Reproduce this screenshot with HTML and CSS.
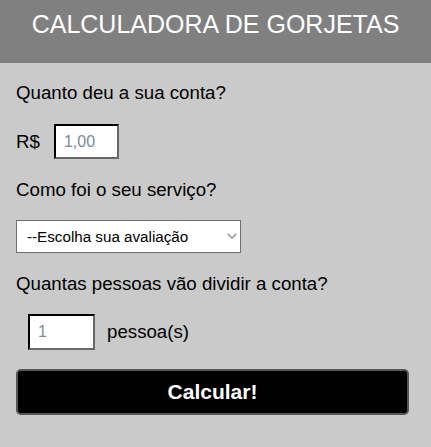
FILE: index.html
```html
<!DOCTYPE html>
<html lang="pt-BR">
<head>
<meta charset="utf-8">
<title>Calculadora de Gorjetas</title>
<link rel="stylesheet" href="styles.css">
</head>
<body>
<header class="topbar">
  <h1 class="title">CALCULADORA DE GORJETAS</h1>
</header>
<main class="content">
  <p class="label">Quanto deu a sua conta?</p>
  <div class="row">
    <span class="unit">R$</span>
    <input class="field field-bill" type="text" placeholder="1,00">
  </div>
  <p class="label">Como foi o seu serviço?</p>
  <div class="select-wrap">
    <select class="select">
      <option>--Escolha sua avaliação</option>
    </select>
    <svg class="chevron" width="10" height="6" viewBox="0 0 10 6" aria-hidden="true">
      <path d="M0.8 0.8 L5 5 L9.2 0.8" fill="none" stroke="#8a8a8a" stroke-width="1.3"/>
    </svg>
  </div>
  <p class="label">Quantas pessoas vão dividir a conta?</p>
  <div class="row row-people">
    <input class="field field-people" type="text" placeholder="1">
    <span class="unit">pessoa(s)</span>
  </div>
  <button class="btn" type="button">Calcular!</button>
</main>
</body>
</html>
```

FILE: styles.css
```css
html, body {
  margin: 0;
  padding: 0;
}
body {
  background: #cacaca;
  font-family: "Liberation Sans", Arial, sans-serif;
  color: #000;
  height: 447px;
}
.topbar {
  background: #808080;
  height: 63px;
  display: flex;
  align-items: flex-start;
  justify-content: center;
}
.title {
  margin: 9px 0 0;
  font-size: 25px;
  font-weight: normal;
  color: #fff;
  line-height: 30px;
}
.content {
  display: flex;
  flex-direction: column;
  align-items: flex-start;
  gap: 20px;
  padding: 19px 16px 0;
}
.label {
  margin: 0;
  font-size: 18.7px;
  line-height: 22px;
}
.row {
  display: flex;
  align-items: center;
  gap: 14px;
  font-size: 18.7px;
}
.row-people {
  padding-left: 12px;
  gap: 12px;
  margin-top: -1px;
}
.field {
  box-sizing: border-box;
  height: 35px;
  border: 2px inset #767676;
  border-color: #333 #6a6a6a #6a6a6a #333;
  background: #fff;
  font-family: "Liberation Sans", Arial, sans-serif;
  font-size: 16px;
  padding: 0 8px;
  margin: 0;
}
.field::placeholder {
  color: #7b8a99;
}
.field-bill {
  width: 65px;
}
.field-people {
  width: 67px;
  height: 36px;
}
.select-wrap {
  position: relative;
  width: 225px;
  height: 33px;
  margin-top: -1px;
}
.select {
  box-sizing: border-box;
  width: 225px;
  height: 33px;
  -webkit-appearance: none;
  appearance: none;
  font-family: "Liberation Sans", Arial, sans-serif;
  font-size: 15.2px;
  background: #fff;
  border: 1px solid #707070;
  border-radius: 0;
  padding: 0 24px 0 10px;
  margin: 0;
  color: #000;
}
.chevron {
  position: absolute;
  right: 4px;
  top: 13px;
  pointer-events: none;
}
.btn {
  box-sizing: border-box;
  width: 393px;
  height: 46px;
  margin-top: -1px;
  background: #000;
  color: #fff;
  border: 2px solid #555;
  border-radius: 5px;
  font-family: "Liberation Sans", Arial, sans-serif;
  font-size: 21px;
  font-weight: bold;
  cursor: pointer;
}
```
